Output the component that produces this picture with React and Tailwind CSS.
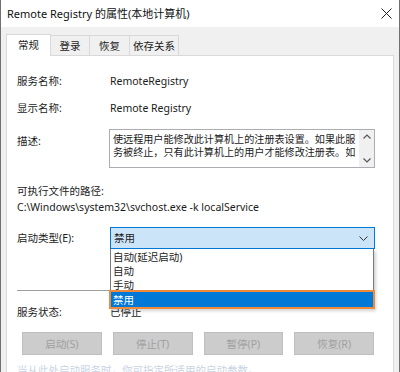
const tabs = ['登录', '恢复', '依存关系']
const tabWidths = ['w-[39px]', 'w-[40px]', 'w-[49px]']

const options = ['自动(延迟启动)', '自动', '手动']

export default function App() {
  return (
    <div className="w-[400px] h-[372px] overflow-hidden flex flex-col bg-[#f0f0f0] border-x border-[#707070] text-[10.5px] leading-[14px] text-[#1b1b1b] font-['Noto_Sans','Noto_Sans_CJK_SC',sans-serif]">
      {/* title bar */}
      <div className="h-[27px] shrink-0 bg-white flex items-center justify-between pl-[6px] pr-[6px]">
        <span className="text-[11px] text-[#111]">Remote Registry 的属性(本地计算机)</span>
        <svg width="11" height="11" viewBox="0 0 11 11" className="mr-[1px]">
          <path d="M0.5 0.5 L10.5 10.5 M10.5 0.5 L0.5 10.5" stroke="#222" strokeWidth="1" fill="none" />
        </svg>
      </div>

      {/* tabs */}
      <div className="h-[28px] shrink-0 flex items-end px-[5px]">
        <div className="relative z-10 w-[45px] h-[22px] -mb-px bg-white border border-b-0 border-[#d9d9d9] flex items-center justify-center pb-[2px]">
          常规
        </div>
        {tabs.map((t, i) => (
          <div
            key={t}
            className={`${tabWidths[i]} h-[20px] bg-[#f0f0f0] border border-l-0 border-b-0 border-[#d9d9d9] flex items-center justify-center`}
          >
            {t}
          </div>
        ))}
      </div>

      {/* panel */}
      <div className="flex-1 mx-[5px] bg-white border border-[#d9d9d9] pl-[10px] pr-[10px] pt-[18px]">
        <div className="flex">
          <span className="w-[93px]">服务名称:</span>
          <span>RemoteRegistry</span>
        </div>
        <div className="flex mt-[13px]">
          <span className="w-[93px]">显示名称:</span>
          <span>Remote Registry</span>
        </div>
        <div className="flex mt-[14px]">
          <span className="w-[92px] pt-[5px]">描述:</span>
          <div className="w-[266px] h-[39px] border border-[#abadb3] flex">
            <div className="flex-1 overflow-hidden pl-[3px] pt-[3px] leading-[13px] text-[10.1px]">
              <div className="whitespace-nowrap">使远程用户能修改此计算机上的注册表设置。如果此服</div>
              <div className="whitespace-nowrap">务被终止，只有此计算机上的用户才能修改注册表。如</div>
            </div>
            <div className="w-[15px] bg-[#f0f0f0] flex flex-col items-center justify-between py-[4px]">
              <svg width="8" height="5" viewBox="0 0 8 5">
                <path d="M0.5 4.5 L4 1 L7.5 4.5" stroke="#555" strokeWidth="1.2" fill="none" />
              </svg>
              <svg width="8" height="5" viewBox="0 0 8 5">
                <path d="M0.5 0.5 L4 4 L7.5 0.5" stroke="#555" strokeWidth="1.2" fill="none" />
              </svg>
            </div>
          </div>
        </div>

        <div className="mt-[16px]">可执行文件的路径:</div>
        <div className="mt-[2px] whitespace-nowrap">C:\Windows\system32\svchost.exe -k localService</div>

        <div className="flex items-center mt-[13px]">
          <span className="w-[93px]">启动类型(E):</span>
          <div className="relative w-[265px]">
            <div className="h-[22px] bg-[#cce4f7] border border-[#0078d7] flex items-center justify-between pl-[3px] pr-[6px]">
              <span>禁用</span>
              <svg width="9" height="5" viewBox="0 0 9 5">
                <path d="M0.5 0.5 L4.5 4.5 L8.5 0.5" stroke="#333" strokeWidth="1" fill="none" />
              </svg>
            </div>
            <div className="absolute z-20 left-0 top-full w-[264px] bg-white border border-[#7a7a7a] border-t-0 shadow-[2px_2px_3px_rgba(0,0,0,0.18)] pt-px pb-px">
              {options.map((o) => (
                <div key={o} className="h-[14px] pl-[2px] flex items-center">
                  {o}
                </div>
              ))}
              <div className="h-[15px] pl-[2px] flex items-center bg-[#0078d7] text-white outline-2 outline-[#ee8a3c]">
                禁用
              </div>
            </div>
          </div>
        </div>

        <div className="mt-[41px] h-px bg-[#a0a0a0] mr-[10px]" />

        <div className="flex mt-[14px]">
          <span className="w-[93px]">服务状态:</span>
          <span>已停止</span>
        </div>

        <div className="grid grid-cols-4 gap-[11px] mt-[13px] ml-[5px] w-[352px]">
          {['启动(S)', '停止(T)', '暂停(P)', '恢复(R)'].map((b) => (
            <div key={b} className="h-[23px] bg-[#cccccc] border border-[#bfbfbf] flex items-center justify-center text-[#a0a0a0]">
              {b}
            </div>
          ))}
        </div>

        <div className="mt-[8px] whitespace-nowrap text-[#c8d4e4]">当从此处启动服务时，你可指定所适用的启动参数。</div>
      </div>
    </div>
  )
}
